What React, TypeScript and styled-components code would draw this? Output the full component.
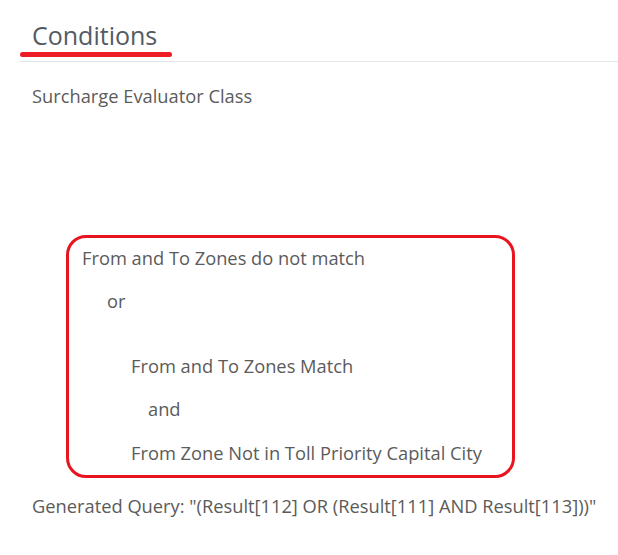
import React from "react";
import styled, { createGlobalStyle } from "styled-components";

const Global = createGlobalStyle`
  html, body { margin: 0; padding: 0; background: #fff; }
  body { font-family: "Open Sans", "Noto Sans", sans-serif; color: #5b5b5b; }
`;

const Page = styled.div`
  width: 618px;
  height: 555px;
  padding: 0 0 0 20px;
  box-sizing: border-box;
  overflow: hidden;
`;

const Header = styled.div`
  display: flex;
  flex-direction: column;
  padding-top: 18px;
`;

const Title = styled.h1`
  margin: 0 0 0 12px;
  font-size: 25px;
  font-weight: 400;
  line-height: 34px;
  color: #535a63;
`;

const RedBar = styled.div`
  width: 152px;
  height: 5px;
  border-radius: 3px;
  background: #ee1c25;
`;

const Divider = styled.div`
  height: 1px;
  background: #e2e5e9;
  margin-top: 4px;
`;

const Label = styled.div`
  margin: 24px 0 0 12px;
  font-size: 18.3px;
  line-height: 20px;
`;

const Box = styled.div`
  margin: 129px 0 0 46px;
  width: 449px;
  height: 243px;
  box-sizing: border-box;
  border: 3px solid #e8141f;
  border-radius: 20px;
  padding-top: 10px;
  display: flex;
  flex-direction: column;
`;

const Line = styled.div<{ $indent: number; $gap: number }>`
  margin-top: ${(p) => p.$gap}px;
  padding-left: ${(p) => p.$indent}px;
  font-size: 18.3px;
  line-height: 20px;
  color: #5b5b5b;
  white-space: nowrap;
`;

const Query = styled.div`
  margin: 18px 0 0 12px;
  font-size: 18.3px;
  line-height: 20px;
  white-space: nowrap;
`;

export default function App() {
  return (
    <>
      <Global />
      <Page>
        <Header>
          <Title>Conditions</Title>
          <RedBar />
          <Divider />
        </Header>
        <Label>Surcharge Evaluator Class</Label>
        <Box>
          <Line $indent={13} $gap={0}>From and To Zones do not match</Line>
          <Line $indent={38} $gap={23}>or</Line>
          <Line $indent={62} $gap={45}>From and To Zones Match</Line>
          <Line $indent={79} $gap={23}>and</Line>
          <Line $indent={62} $gap={24}>From Zone Not in Toll Priority Capital City</Line>
        </Box>
        <Query>Generated Query: "(Result[112] OR (Result[111] AND Result[113]))"</Query>
      </Page>
    </>
  );
}
